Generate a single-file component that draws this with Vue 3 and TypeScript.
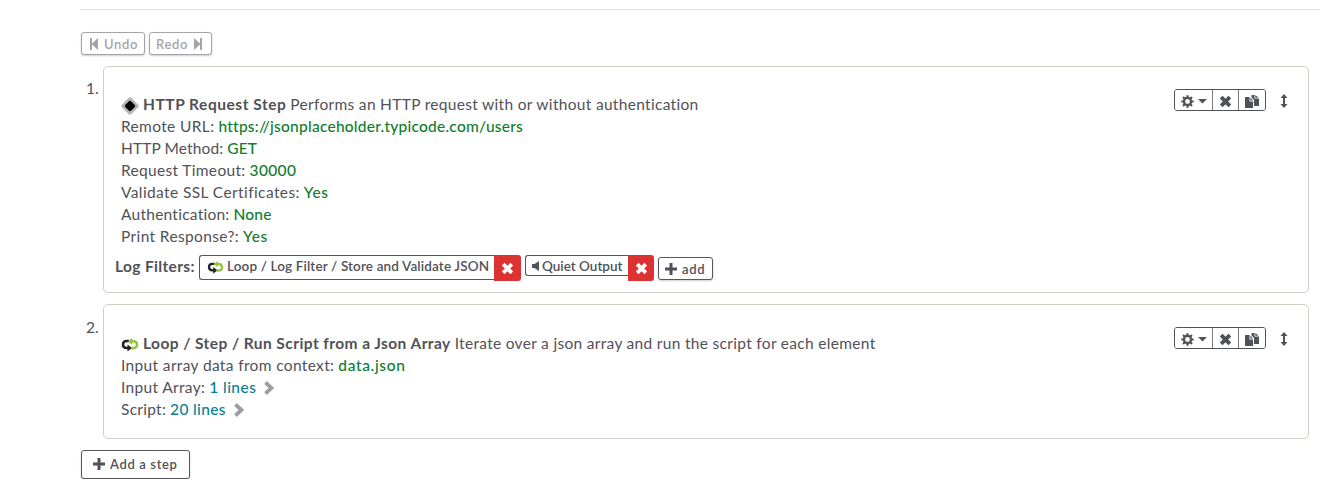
<script setup lang="ts">
interface Field { label: string; value: string; kind?: 'link'; tracking: [number, number] }
interface Filter { title: string; icon: 'loop' | 'quiet' }
interface Step {
  icon: 'http' | 'loop'
  title: string
  description: string
  fields: Field[]
  filters?: Filter[]
}

const steps: Step[] = [
  {
    icon: 'http',
    title: 'HTTP Request Step',
    description: 'Performs an HTTP request with or without authentication',
    fields: [
      { label: 'Remote URL:', value: 'https://jsonplaceholder.typicode.com/users', tracking: [0.36, 0.24] },
      { label: 'HTTP Method:', value: 'GET', tracking: [0.12, 0.1] },
      { label: 'Request Timeout:', value: '30000', tracking: [0.33, 0.35] },
      { label: 'Validate SSL Certificates:', value: 'Yes', tracking: [0.4, 0.6] },
      { label: 'Authentication:', value: 'None', tracking: [0.25, 0.2] },
      { label: 'Print Response?:', value: 'Yes', tracking: [0.37, 0.6] },
    ],
    filters: [
      { title: 'Loop / Log Filter / Store and Validate JSON', icon: 'loop' },
      { title: 'Quiet Output', icon: 'quiet' },
    ],
  },
  {
    icon: 'loop',
    title: 'Loop / Step / Run Script from a Json Array',
    description: 'Iterate over a json array and run the script for each element',
    fields: [
      { label: 'Input array data from context:', value: 'data.json', tracking: [0.35, 0.65] },
      { label: 'Input Array:', value: '1 lines', kind: 'link', tracking: [0.33, 0.45] },
      { label: 'Script:', value: '20 lines', kind: 'link', tracking: [0.28, 0.35] },
    ],
  },
]
</script>

<template>
  <svg class="sprite" aria-hidden="true">
    <symbol id="i-loop" viewBox="0 0 17 14">
      <path d="M7.500 3H5.200C2.800 3 1.500 4.500 1.500 6.500S3 10 5.200 10H7" fill="none" stroke="#222" stroke-width="2.500" />
      <path d="M6 6.400v7.200L10.600 10z" fill="#222" />
      <path d="M9.500 10.200h1.800c2.600 0 4.200-1.500 4.200-3.600S14 3.200 11.500 3.200H9.500" fill="none" stroke="#8fc63d" stroke-width="2.500" />
      <path d="M10.800 0v6.800L6.300 3.400z" fill="#8fc63d" />
    </symbol>
    <symbol id="i-http" viewBox="0 0 18 18">
      <rect x="2.300" y="2.300" width="13.400" height="13.400" rx="2.200" transform="rotate(45 9 9)" fill="#b5b5b5" />
      <rect x="4.900" y="4.900" width="8.200" height="8.200" rx="1.400" transform="rotate(45 9 9)" fill="#000" />
    </symbol>
    <symbol id="i-x" viewBox="0 0 12 12"><path d="M2 2l8 8M10 2l-8 8" stroke="currentColor" stroke-width="3.600" /></symbol>
    <symbol id="i-plus" viewBox="0 0 12 12"><path d="M6 0v12M0 6h12" stroke="currentColor" stroke-width="3" /></symbol>
  </svg>

  <main class="workflow">
    <div class="history">
      <button class="btn disabled undo">
        <svg width="8" height="12" viewBox="0 0 8 12"><path d="M0 0h2v5.500L8 0v12L2 6.500V12H0z" fill="currentColor" /></svg>
        <span>Undo</span>
      </button>
      <button class="btn disabled redo">
        <span>Redo</span>
        <svg width="8" height="12" viewBox="0 0 8 12"><path d="M8 0H6v5.500L0 0v12l6-5.500V12h2z" fill="currentColor" /></svg>
      </button>
    </div>

    <section v-for="(step, i) in steps" :key="step.title" class="step" :class="'step-' + step.icon">
      <span class="number">{{ i + 1 }}.</span>
      <div class="card">
        <div class="info">
          <div class="row">
            <svg v-if="step.icon === 'http'" class="type-icon http"><use href="#i-http" /></svg>
            <svg v-else class="type-icon loop"><use href="#i-loop" /></svg>
            <strong class="title">{{ step.title }}</strong>
            <span class="description">{{ step.description }}</span>
          </div>
          <div v-for="field in step.fields" :key="field.label" class="row">
            <span class="label" :style="{ letterSpacing: field.tracking[0] + 'px' }">{{ field.label }}</span>
            <span class="value" :class="field.kind" :style="{ letterSpacing: field.tracking[1] + 'px' }">{{ field.value }}</span>
            <svg v-if="field.kind === 'link'" class="chevron" viewBox="0 0 10 14"><path d="M1.500 1.500L7.500 7l-6 5.500" fill="none" stroke="currentColor" stroke-width="3.800" /></svg>
          </div>
        </div>

        <div v-if="step.filters" class="filters">
          <strong class="filters-label">Log Filters:</strong>
          <div v-for="filter in step.filters" :key="filter.title" class="filter" :class="filter.icon">
            <span class="filter-name">
              <svg v-if="filter.icon === 'loop'" class="loop-small"><use href="#i-loop" /></svg>
              <svg v-else width="7" height="10" viewBox="0 0 7 10"><path d="M0 3h2.500L7 0v10L2.500 7H0z" fill="currentColor" /></svg>
              <span>{{ filter.title }}</span>
            </span>
            <button class="remove"><svg width="13" height="13"><use href="#i-x" /></svg></button>
          </div>
          <button class="btn add"><svg width="12" height="12"><use href="#i-plus" /></svg><span>add</span></button>
        </div>

        <div class="controls">
          <div class="group">
            <button class="gear">
              <svg width="13" height="13" viewBox="0 0 14 14">
                <circle cx="7" cy="7" r="3.800" fill="none" stroke="currentColor" stroke-width="2.400" />
                <path d="M7 .3V3M7 11v2.700M.3 7H3M11 7h2.700M2.200 2.200l1.800 1.800M10 10l1.800 1.800M11.800 2.200L10 4M4 10l-1.800 1.800" stroke="currentColor" stroke-width="2.400" />
              </svg>
              <svg width="9" height="5" viewBox="0 0 9 5"><path d="M0 0h9L4.500 4.500z" fill="currentColor" /></svg>
            </button>
            <button class="delete"><svg width="13" height="13"><use href="#i-x" /></svg></button>
            <button class="copy">
              <svg width="14" height="13" viewBox="0 0 14 13">
                <path d="M0 2h4.500v4.500H8V13H0zM5.300 2.500L8 5.500H5.300zM6.500 0H9.500v3.500h4.500V11H9V5L6.500 2.200zM10.300 0L13.500 2.800H10.300z" fill="currentColor" />
              </svg>
            </button>
          </div>
          <svg class="drag" width="8" height="14" viewBox="0 0 8 14"><path d="M4 0l3.500 4H5v6h2.500L4 14 .5 10H3V4H.5z" fill="currentColor" /></svg>
        </div>
      </div>
    </section>

    <button class="btn add-step"><svg width="12" height="12"><use href="#i-plus" /></svg><span>Add a step</span></button>
  </main>
</template>

<style>
body { background: #fff; }
</style>

<style scoped>
* { box-sizing: border-box; }
.sprite { display: none; }
svg { display: block; flex: none; }
button { font: inherit; color: inherit; background: #fff; margin: 0; padding: 0; border: 0; display: flex; align-items: center; }
.workflow {
  margin: 9px 3px 0 81px;
  border-top: 1px solid #e2e2e2;
  padding-top: 22px;
  font: 15.5px/22px Lato, "Liberation Sans", sans-serif;
  font-variant-ligatures: none;
  color: #515158;
  white-space: nowrap;
}
.history { display: flex; gap: 4px; margin-bottom: 11px; }
.btn { border: 1px solid #55555d; border-radius: 3px; box-shadow: 0 1px 2px rgba(0, 0, 0, .2); font-size: 13px; font-weight: 600; letter-spacing: .65px; }
.disabled { height: 23px; color: #a5a5a9; border-color: #a5a5a9; }
.undo { width: 64px; padding-left: 8px; gap: 6px; }
.redo { width: 63px; padding-left: 6px; gap: 6px; }
.step { display: flex; width: 1228px; margin-bottom: 11px; }
.number { width: 22px; padding: 12px 0 0 5px; }
.card { position: relative; flex: 1; border: 1px solid #cfcfc8; border-radius: 5px; padding: 27px 17px 0; }
.step-http .card { height: 227px; padding-top: 26px; }
.step-http .number { padding-top: 11px; }
.step-loop .card { height: 135px; }
.row { display: flex; align-items: center; height: 22px; gap: 4px; }
.title { letter-spacing: .43px; }
.step-http .title { letter-spacing: .53px; }
.description { letter-spacing: .31px; }
.type-icon.http { width: 18px; height: 18px; margin-top: 4px; }
.type-icon.loop { width: 18px; height: 14px; margin-top: 3px; }
.value { color: #0f7d2d; font-weight: 500; }
.value.link { color: #087f91; }
.chevron { width: 10px; height: 14px; margin: 1px 0 0 4px; color: #9d9da5; }
.filters { display: flex; align-items: flex-start; margin: 8px 0 0 -6px; }
.filters-label { width: 84px; letter-spacing: .36px; }
.filter { display: flex; align-items: flex-start; margin-right: 4px; font-size: 13.5px; font-weight: 600; }
.filter-name { display: flex; align-items: center; height: 25px; border: 1px solid #55555d; border-right: 0; border-radius: 3px 0 0 3px; }
.filter.loop .filter-name { width: 295px; padding: 0 0 3px 7px; gap: 3px; letter-spacing: .14px; }
.filter.quiet .filter-name { height: 21px; width: 103px; padding-left: 6px; gap: 3px; }
.loop-small { width: 17px; height: 13px; margin-top: 3px; }
.remove { width: 27px; height: 26px; justify-content: center; background: #dc3232; color: #fff; border-radius: 0 3px 3px 0; }
.filter.quiet .remove { width: 26px; }
.add { width: 55px; height: 23px; margin-top: 2px; padding-left: 6px; gap: 5px; }
.controls { position: absolute; top: 22px; right: 20px; display: flex; align-items: center; }
.group { display: flex; width: 92px; height: 22px; border: 1px solid #515158; border-radius: 3px; overflow: hidden; }
.group button { justify-content: center; padding-top: 2px; }
.gear { width: 37px; gap: 4px; }
.group .delete { width: 26px; border-left: 1px solid #777780; }
.group .copy { width: 27px; border-left: 1px solid #777780; }
.drag { margin: 2px 0 0 14px; }
.add-step { width: 109px; height: 29px; padding: 0 0 1px 11px; gap: 5px; }
</style>
